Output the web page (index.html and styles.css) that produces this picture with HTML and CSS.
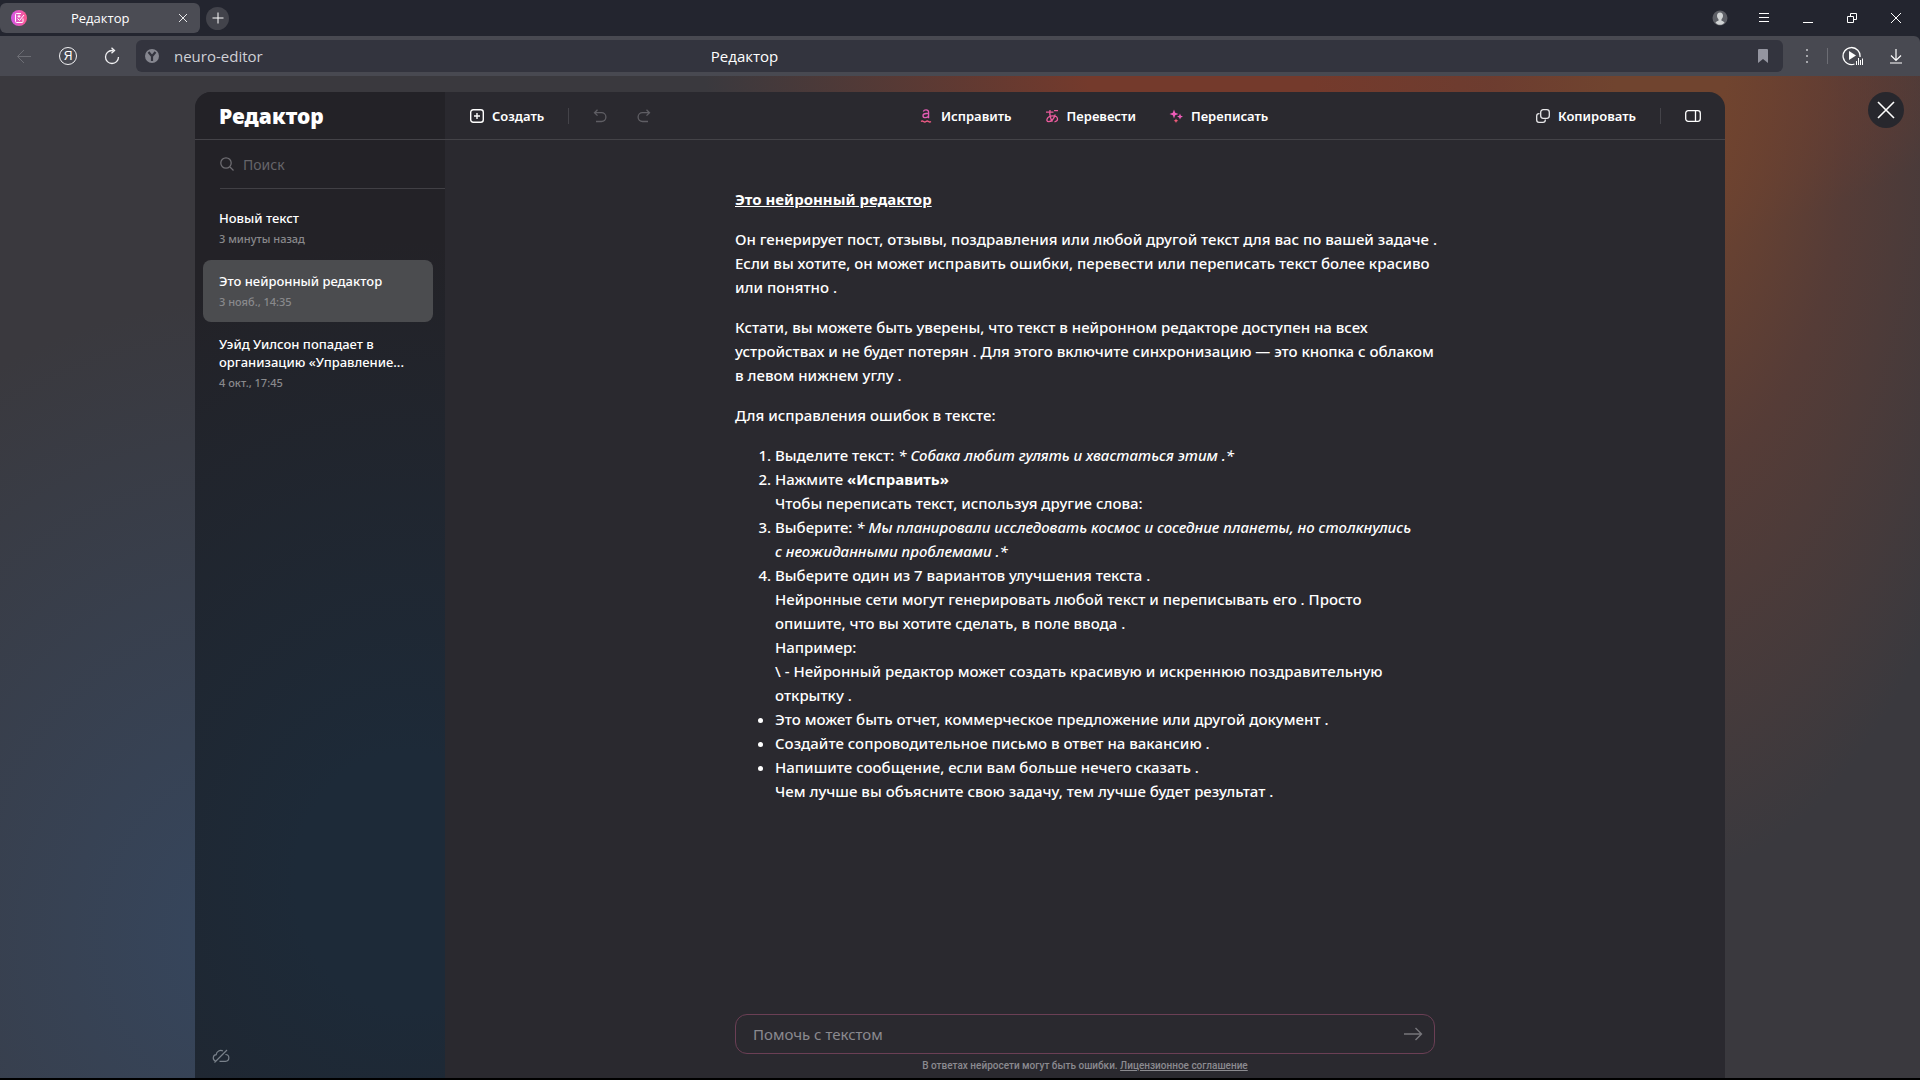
FILE: index.html
```html
<!DOCTYPE html>
<html lang="ru">
<head>
    <meta charset="UTF-8">
    <meta name="viewport" content="width=device-width, initial-scale=1.0">
    <title>Редактор</title>
    <link rel="stylesheet" href="styles.css">
</head>
<body>
    <!-- вкладки -->
    <header class="tabs">
        <div class="tab">
            <svg class="tab-logo" width="16" height="16" viewBox="0 0 16 16" fill="none" stroke="#fff">
                <defs>
                    <linearGradient id="pink" x1="0" y1="0" x2="1" y2="0">
                        <stop offset="0" stop-color="#d557e8"/>
                        <stop offset="1" stop-color="#fb5a8d"/>
                    </linearGradient>
                </defs>
                <circle cx="8" cy="8" r="8" fill="url(#pink)" stroke="none"/>
                <path d="M12 8.500V11.500a1 1 0 0 1-1 1H5.500a1 1 0 0 1-1-1V4.500a1 1 0 0 1 1-1H10M6.500 8.500l2 2L13 5M8 4.800v3M6.500 6.300h3"/>
            </svg>
            <span class="tab-title">Редактор</span>
            <button class="icon-btn" aria-label="Закрыть вкладку">
                <svg width="10" height="10" viewBox="0 0 10 10" stroke="#e8e8ea"><path d="M1 1l8 8M9 1L1 9"/></svg>
            </button>
        </div>
        <button class="new-tab" aria-label="Новая вкладка">
            <svg width="12" height="12" viewBox="0 0 12 12" stroke="#fff"><path d="M6 .5v11M.5 6h11"/></svg>
        </button>
        <div class="window-controls">
            <button class="icon-btn" aria-label="Профиль">
                <svg width="16" height="16" viewBox="0 0 16 16">
                    <circle cx="8" cy="8" r="7.500" fill="#5d5f66"/>
                    <path d="M8 2.500c2 0 3 1.400 3 3.300 0 1.600-.7 2.600-1.500 3.400v1.600c1.300.4 2.500.9 3 1.700-1 1.500-2.700 2.300-4.500 2.300s-3.500-.8-4.500-2.300c.5-.8 1.700-1.300 3-1.700V9.200C5.700 8.400 5 7.400 5 5.800 5 3.900 6 2.500 8 2.500z" fill="#d0d3d4"/>
                </svg>
            </button>
            <button class="icon-btn" aria-label="Меню">
                <svg width="12" height="12" viewBox="0 0 12 12" stroke="#fff"><path d="M1 1.500h10M1 5.500h10M1 9.500h10"/></svg>
            </button>
            <button class="icon-btn" aria-label="Свернуть">
                <svg width="12" height="12" viewBox="0 0 12 12" stroke="#fff"><path d="M1 10.500h10"/></svg>
            </button>
            <button class="icon-btn" aria-label="Развернуть">
                <svg width="12" height="12" viewBox="0 0 12 12" fill="none" stroke="#fff"><path d="M1.500 4.500h6v6h-6zM4.500 4.500v-3h6v6h-3"/></svg>
            </button>
            <button class="icon-btn" aria-label="Закрыть">
                <svg width="12" height="12" viewBox="0 0 12 12" stroke="#fff"><path d="M1 1l10 10M11 1L1 11"/></svg>
            </button>
        </div>
    </header>

    <!-- адресная строка -->
    <nav class="address-bar">
        <button class="nav-btn" aria-label="Назад">
            <svg width="16" height="16" viewBox="0 0 16 16" fill="none" stroke="#6c6d74"><path d="M15 8.500H1.500M8 2L1.500 8.500 8 15"/></svg>
        </button>
        <button class="nav-btn" aria-label="Яндекс">
            <span class="ya">Я</span>
        </button>
        <button class="nav-btn" aria-label="Обновить">
            <svg width="18" height="18" viewBox="0 0 18 18" fill="none" stroke="#f2f2f4" stroke-width="1.300"><path d="M10.500 3.500H9A6.500 6.500 0 1 0 15.500 10M8.500 .8l3 2.700-3 2.700"/></svg>
        </button>
        <div class="url">
            <svg width="14" height="14" viewBox="0 0 14 14"><circle cx="7" cy="7" r="7" fill="#85868f"/><path d="M3.500 3L7 7.200 10.500 3M7 7v5" stroke="#33343e" stroke-width="2.200" fill="none"/></svg>
            <span class="host">neuro-editor</span>
            <span class="page-title">Редактор</span>
            <svg class="bookmark" width="10" height="14" viewBox="0 0 10 14"><path d="M1 0h8a1 1 0 0 1 1 1v13l-5-4-5 4V1a1 1 0 0 1 1-1z" fill="#9495a0"/></svg>
        </div>
        <div class="extras">
            <svg class="dots" width="4" height="14" viewBox="0 0 4 14" fill="#a6a7ac"><path d="M1 0h2v2H1zM1 6h2v2H1zM1 12h2v2H1z"/></svg>
            <i class="divider light"></i>
            <svg class="player" width="22" height="20" viewBox="0 0 22 20"><path d="M12.500 18A8.500 8.500 0 1 1 18 11" fill="none" stroke="#fff" stroke-width="1.300"/><path d="M7 5l7 4.500L7 14z" fill="#fff"/><path d="M14.500 15v4M16.500 12v7M18.500 14v5M20.500 12.500v6.500" stroke="#fff"/></svg>
            <svg width="14" height="16" viewBox="0 0 14 16" fill="none" stroke="#fff"><path d="M7 1v11M2 7.500l5 5 5-5M1 15h12" stroke-width="1.200"/></svg>
        </div>
    </nav>

    <div class="page">
        <main class="editor">
            <aside class="sidebar">
                <h1 class="logo">Редактор</h1>
                <label class="search">
                    <svg width="14" height="14" viewBox="0 0 14 14" fill="none" stroke="#6d6c71" stroke-width="1.300"><circle cx="6" cy="6" r="5.200"/><path d="M10 10l3.500 3.500"/></svg>
                    <input type="search" placeholder="Поиск" aria-label="Поиск">
                </label>
                <ul class="docs">
                    <li class="doc"><b>Новый текст</b><time>3 минуты назад</time></li>
                    <li class="doc active"><b>Это нейронный редактор</b><time>3 нояб., 14:35</time></li>
                    <li class="doc"><b>Уэйд Уилсон попадает в<br>организацию «Управление...</b><time>4 окт., 17:45</time></li>
                </ul>
                <button class="sync" aria-label="Синхронизация">
                    <svg width="18" height="14" viewBox="0 0 18 14" fill="none" stroke="#79818a" stroke-width="1.200"><path d="M3.500 12A3.300 3.300 0 0 1 4.200 5.600 4.600 4.600 0 0 1 11 2M13.400 5.500A3.300 3.300 0 0 1 13.500 12.300H7.500M2.500 13.500L15 1"/></svg>
                </button>
            </aside>

            <section class="workspace">
                <div class="toolbar">
                    <div class="group">
                        <button class="tool">
                            <svg width="14" height="14" viewBox="0 0 14 14" fill="none" stroke="#fff" stroke-width="1.400"><rect x=".7" y=".7" width="12.600" height="12.600" rx="2.500"/><path d="M7 4v6M4 7h6"/></svg>
                            Создать
                        </button>
                        <i class="divider"></i>
                        <div class="history">
                            <button class="icon-btn" aria-label="Отменить">
                                <svg width="14" height="14" viewBox="0 0 14 14" fill="none" stroke="#5f5e64" stroke-width="1.300"><path d="M4.500 .8L1.500 3.700l3 2.900M1.500 3.700H8.500a4.400 4.400 0 0 1 0 8.800H3"/></svg>
                            </button>
                            <button class="icon-btn" aria-label="Повторить">
                                <svg width="14" height="14" viewBox="0 0 14 14" fill="none" stroke="#5f5e64" stroke-width="1.300"><path d="M9.500 .8l3 2.900-3 2.900M12.500 3.700H5.500a4.400 4.400 0 0 0 0 8.800H11"/></svg>
                            </button>
                        </div>
                    </div>
                    <div class="group actions">
                        <button class="tool">
                            <svg width="14" height="14" viewBox="0 0 14 14" fill="none" stroke="#e45cb4" stroke-width="1.300"><path d="M4.300 2.600C4.800 1.300 5.800.8 7 .8c1.700 0 2.600.9 2.600 2.500v5.900M9.600 4.500H7.300C5.200 4.500 4 5.200 4 6.700c0 1.200.9 2 2.300 2 1.900 0 3.300-1.200 3.300-2.900"/><path d="M2 12.500c.9-.7 1.600-.7 2.500 0s1.600.7 2.500 0 1.600-.7 2.500 0 1.600.7 2.500 0" stroke="#f05b86"/></svg>
                            Исправить
                        </button>
                        <button class="tool">
                            <svg width="14" height="14" viewBox="0 0 14 14" fill="none" stroke="#ea5b9d" stroke-width="1.300"><path d="M1 3.200h7.500M5 1c-.5 4.500 0 8.500 2.500 11.500M10.300 5.500C8.800 10 6 12.700 3.500 12.700 .5 12.700 1.500 7.200 7.500 6.900c6-.2 6.500 4.800 2 6M9 1.600h4"/></svg>
                            Перевести
                        </button>
                        <button class="tool">
                            <svg width="14" height="14" viewBox="0 0 14 14" fill="#ee5cb8"><path d="M5 .5l1.200 3.300 3.300 1.200-3.300 1.200L5 9.500 3.800 6.200.5 5l3.300-1.200z"/><path d="M11 4.500l.9 2.200 2.100.8-2.100.9L11 10.500l-.9-2.100L8 7.500l2.100-.8z"/><path d="M7 9.500l.7 1.600 1.600.6-1.600.7L7 14l-.7-1.600-1.600-.7 1.600-.6z" fill="#f05b7a"/></svg>
                            Переписать
                        </button>
                    </div>
                    <div class="group">
                        <button class="tool">
                            <svg width="14" height="14" viewBox="0 0 14 14" fill="none" stroke="#e8e8ea" stroke-width="1.300"><rect x="4.700" y=".7" width="8.600" height="8.600" rx="2.500"/><path d="M3.500 4.700H3A2.300 2.300 0 0 0 .7 7v4A2.300 2.300 0 0 0 3 13.300h4A2.300 2.300 0 0 0 9.300 11v-.5"/></svg>
                            Копировать
                        </button>
                        <i class="divider"></i>
                        <button class="icon-btn" aria-label="Панель">
                            <svg width="16" height="12" viewBox="0 0 16 12" fill="none" stroke="#fff" stroke-width="1.300"><rect x=".7" y=".7" width="14.600" height="10.600" rx="2.500"/><path d="M10.500 1v10"/></svg>
                        </button>
                    </div>
                </div>

                <article class="text">
                    <p><b><u>Это нейронный редактор</u></b></p>
                    <p>Он генерирует пост, отзывы, поздравления или любой другой текст для вас по вашей задаче .<br>Если вы хотите, он может исправить ошибки, перевести или переписать текст более красиво<br>или понятно .</p>
                    <p>Кстати, вы можете быть уверены, что текст в нейронном редакторе доступен на всех<br>устройствах и не будет потерян . Для этого включите синхронизацию — это кнопка с облаком<br>в левом нижнем углу .</p>
                    <p>Для исправления ошибок в тексте:</p>
                    <ol>
                        <li>Выделите текст: <em>* Собака любит гулять и хвастаться этим .*</em></li>
                        <li>Нажмите <b>«Исправить»</b><br>Чтобы переписать текст, используя другие слова:</li>
                        <li>Выберите: <em>* Мы планировали исследовать космос и соседние планеты, но столкнулись<br>с неожиданными проблемами .*</em></li>
                        <li>Выберите один из 7 вариантов улучшения текста .<br>Нейронные сети могут генерировать любой текст и переписывать его . Просто<br>опишите, что вы хотите сделать, в поле ввода .<br>Например:<br>\ - Нейронный редактор может создать красивую и искреннюю поздравительную<br>открытку .</li>
                    </ol>
                    <ul>
                        <li>Это может быть отчет, коммерческое предложение или другой документ .</li>
                        <li>Создайте сопроводительное письмо в ответ на вакансию .</li>
                        <li>Напишите сообщение, если вам больше нечего сказать .<br>Чем лучше вы объясните свою задачу, тем лучше будет результат .</li>
                    </ul>
                </article>

                <footer class="prompt">
                    <form class="prompt-box">
                        <input type="text" placeholder="Помочь с текстом" aria-label="Помочь с текстом">
                        <button class="icon-btn" type="button" aria-label="Отправить">
                            <svg width="20" height="14" viewBox="0 0 20 14" fill="none" stroke="#77767b" stroke-width="1.400"><path d="M1 7h17.500M12.500 1l6 6-6 6"/></svg>
                        </button>
                    </form>
                    <small>В ответах нейросети могут быть ошибки. <a href="#">Лицензионное соглашение</a></small>
                </footer>
            </section>
        </main>
        <button class="close" aria-label="Закрыть редактор">
            <svg width="18" height="18" viewBox="0 0 18 18" stroke="#fff" stroke-width="1.600"><path d="M1 1l16 16M17 1L1 17"/></svg>
        </button>
    </div>
</body>
</html>
```

FILE: styles.css
```css
* {
    box-sizing: border-box;
}
body {
    margin: 0;
    height: 100vh;
    display: flex;
    flex-direction: column;
    border-bottom: 2px solid #000;
    background-color: #23252f;
    color: #fff;
    font-family: "Noto Sans", "Open Sans", sans-serif;
    font-size: 13px;
}
button {
    display: flex;
    align-items: center;
    justify-content: center;
    padding: 0;
    border: 0;
    background: none;
    color: inherit;
    font: inherit;
}
input {
    flex: 1;
    min-width: 0;
    padding: 0;
    border: 0;
    outline: 0;
    background: none;
    color: inherit;
    font: inherit;
}
svg {
    flex: none;
    display: block;
}

/* вкладки */
.tabs {
    display: flex;
    align-items: center;
    height: 36px;
    font-family: "Open Sans", "Noto Sans", sans-serif;
}
.tab {
    display: flex;
    align-items: center;
    width: 200px;
    height: 30px;
    padding: 0 12px 0 11px;
    border-radius: 6px;
    background-color: #4b4c54;
}
.tab-title {
    flex: 1;
    padding-left: 44px;
}
.new-tab {
    width: 23px;
    height: 23px;
    margin-left: 6px;
    border-radius: 50%;
    background-color: #42434b;
}
.window-controls {
    display: flex;
    margin-left: auto;
    padding-right: 2px;
}
.window-controls .icon-btn {
    width: 44px;
    height: 36px;
}

/* адресная строка */
.address-bar {
    display: flex;
    align-items: center;
    height: 40px;
    padding-left: 2px;
    border-radius: 0 6px 0 0;
    background-color: #484951;
    font-family: "Open Sans", "Noto Sans", sans-serif;
}
.nav-btn {
    width: 44px;
    height: 32px;
}
.ya {
    width: 18px;
    height: 18px;
    border: 1px solid #f2f2f4;
    border-radius: 50%;
    font: 12px/16px "Liberation Sans", sans-serif;
}
.url {
    flex: 1;
    display: flex;
    align-items: center;
    height: 32px;
    margin-left: 2px;
    padding: 0 15px 0 9px;
    border-radius: 6px;
    background-color: #33343e;
    font-size: 15px;
}
.host {
    flex: 0 0 34%;
    padding-left: 15px;
    color: #cfd0d6;
}
.bookmark {
    margin-left: auto;
}
.extras {
    display: flex;
    align-items: center;
    gap: 14px;
    padding: 0 17px 0 22px;
}
.dots {
    margin-right: 4px;
}
.player {
    margin-right: 11px;
}
.divider {
    width: 1px;
    height: 16px;
    background-color: #444349;
}
.divider.light {
    background-color: #6c6d74;
}

/* фон страницы */
.page {
    flex: 1;
    display: flex;
    justify-content: center;
    position: relative;
    min-height: 0;
    padding-top: 16px;
    background:
        radial-gradient(ellipse 360px 800px at 87% 0, #70442f 15%, rgba(104, 62, 50, .6) 50%, rgba(80, 56, 58, 0) 100%),
        radial-gradient(ellipse 640px 200px at 70% 0, #743a2c 40%, rgba(116, 58, 44, 0) 100%),
        radial-gradient(ellipse 560px 640px at 13% 86%, #36455b 10%, rgba(54, 69, 91, 0) 100%),
        #3a393e;
}
.editor {
    display: flex;
    width: calc(100% - 390px);
    border-radius: 16px 16px 0 0;
    background-color: #2a292f;
    overflow: hidden;
}
.close {
    position: absolute;
    top: 16px;
    right: 16px;
    width: 36px;
    height: 36px;
    border-radius: 50%;
    background-color: #27272d;
}

/* список текстов */
.sidebar {
    display: flex;
    flex-direction: column;
    width: 250px;
    background:
        radial-gradient(ellipse 560px 640px at 85% 80%, #1d2a38 20%, rgba(29, 42, 56, 0) 100%),
        #232227;
}
.logo {
    height: 48px;
    margin: 0;
    padding-left: 24px;
    border-bottom: 1px solid #444348;
    font-size: 21px;
    font-weight: 900;
    line-height: 48px;
}
.search {
    display: flex;
    align-items: center;
    gap: 9px;
    height: 49px;
    margin-left: 25px;
    border-bottom: 1px solid #414045;
    font-size: 14px;
}
.search input::placeholder {
    color: #66656a;
}
.docs {
    display: flex;
    flex-direction: column;
    gap: 1px;
    margin: 8px 12px 0 8px;
    padding: 0;
    list-style: none;
}
.doc {
    padding: 12px 0 12px 16px;
    border-radius: 8px;
    white-space: nowrap;
}
.doc.active {
    background-color: #4b4c4f;
}
.doc b {
    display: block;
    font-weight: 500;
    line-height: 18px;
}
.doc time {
    display: block;
    margin-top: 4px;
    color: #89898c;
    font-size: 11px;
    font-weight: 500;
    line-height: 16px;
}
.sync {
    align-self: flex-start;
    margin: auto 0 15px 17px;
}

/* панель инструментов */
.workspace {
    flex: 1;
    display: flex;
    flex-direction: column;
    min-width: 0;
}
.toolbar {
    display: flex;
    align-items: center;
    justify-content: space-between;
    height: 48px;
    padding: 0 24px 0 25px;
    border-bottom: 1px solid #444348;
}
.group {
    display: flex;
    align-items: center;
    gap: 24px;
}
.group.actions {
    gap: 33px;
}
.history {
    display: flex;
    gap: 30px;
}
.tool {
    gap: 8px;
    font-weight: 600;
}

/* текст */
.text {
    flex: 1;
    width: 700px;
    margin: 47px auto 0;
    font-size: 15px;
    font-weight: 500;
    line-height: 24px;
    white-space: nowrap;
}
.text p {
    margin: 0 0 16px;
}
.text b {
    font-weight: 700;
}
.text ol,
.text ul {
    margin: 0;
    padding-left: 40px;
}

/* поле ввода */
.prompt {
    width: 700px;
    margin: 0 auto 4px;
    color: #8b8a8f;
    text-align: center;
}
.prompt-box {
    display: flex;
    align-items: center;
    height: 40px;
    padding: 0 11px 0 17px;
    border: 1px solid #6b3f55;
    border-radius: 12px;
    font-size: 15px;
}
.prompt-box input::placeholder {
    color: #8b8a8f;
}
.prompt small {
    display: block;
    margin-top: 4px;
    font-family: Roboto, "Noto Sans", sans-serif;
    font-size: 10px;
    font-weight: 500;
    line-height: 16px;
}
.prompt a {
    color: inherit;
}
```
